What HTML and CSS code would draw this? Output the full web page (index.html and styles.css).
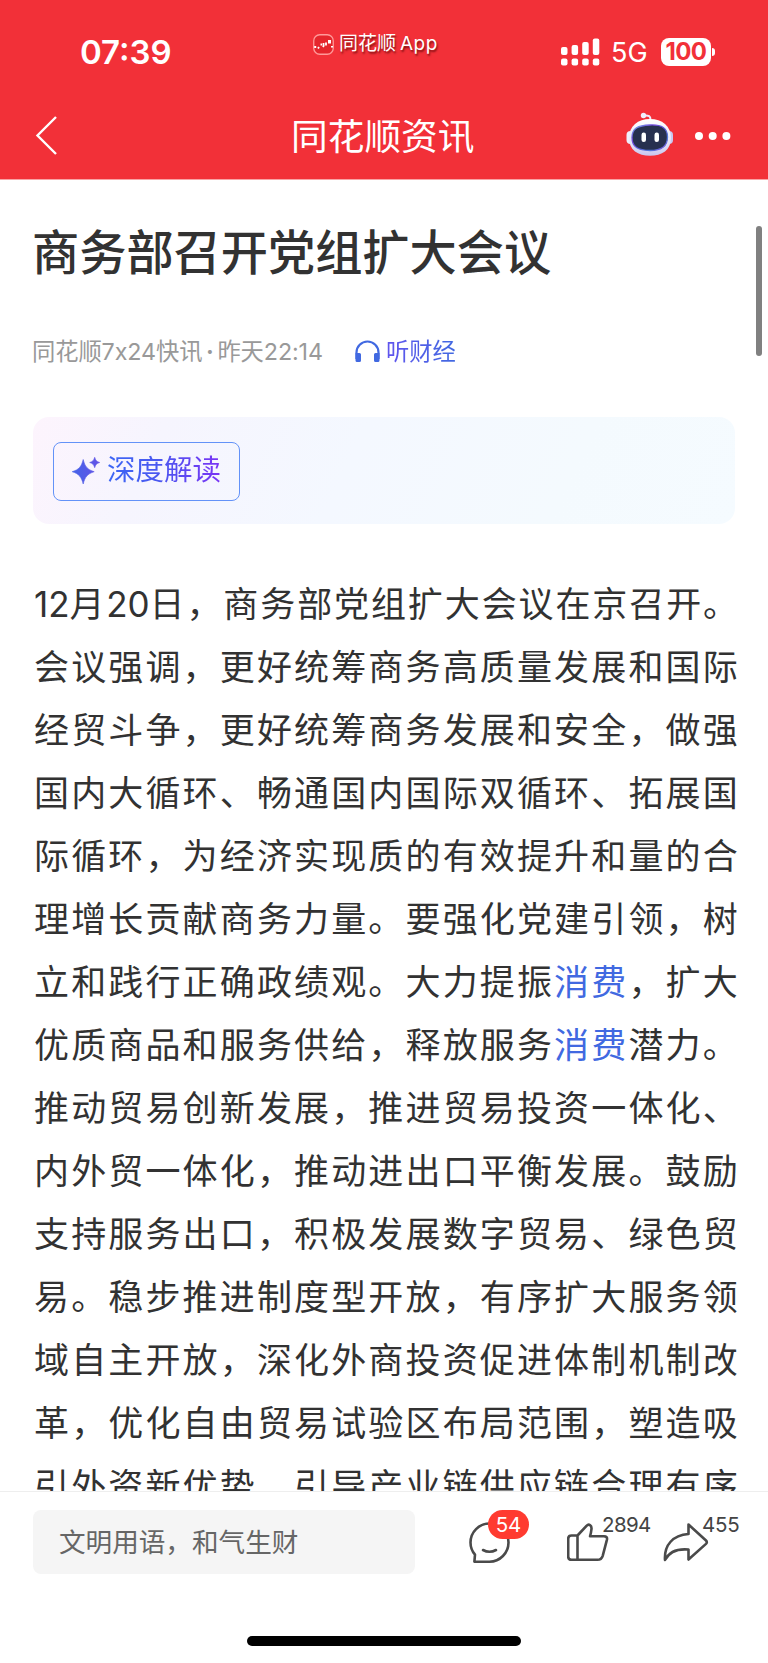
FILE: index.html
```html
<!DOCTYPE html>
<html lang="zh-CN">
<head>
<meta charset="utf-8">
<title>同花顺资讯</title>
<link rel="stylesheet" href="styles.css">
</head>
<body>
<div class="screen">
  <header class="header">
    <div class="status">
      <span class="time">07:39</span>
      <div class="source-app">
        <svg class="app-logo" width="21" height="21" viewBox="0 0 21 21"><rect x=".75" y=".75" width="19.5" height="19.5" rx="6" fill="#e5252c" stroke="#f99" stroke-width="1.3"/><path d="M1.200 13h2M5 14.500l1-1.500M7.500 10.500h1.500M10 13l1-2M10.500 9v3M13 11.500v-3" fill="none" stroke="#fff" stroke-width="1.800"/><path d="M15 6h3v3.500h-3zM18 12h2v1.500h-2z" fill="#fff"/></svg>
        <span class="app-name">同花顺</span><span class="app-latin">App</span>
      </div>
      <svg class="signal" width="39" height="28" viewBox="0 0 39 28" fill="#fff"><rect x="0" y="9" width="6.500" height="8" rx="2"/><rect x="10.600" y="7" width="6.500" height="10" rx="2"/><rect x="21.200" y="4" width="6.500" height="13" rx="2"/><rect x="31.800" y="0.500" width="6.500" height="16.500" rx="2"/><rect x="0" y="20.500" width="6.500" height="7" rx="2"/><rect x="10.600" y="20.500" width="6.500" height="7" rx="2"/><rect x="21.200" y="20.500" width="6.500" height="7" rx="2"/><rect x="31.800" y="20.500" width="6.500" height="7" rx="2"/></svg>
      <span class="network">5G</span>
      <span class="battery">100</span><span class="battery-tip"></span>
    </div>
    <nav class="navbar">
      <svg class="back" width="23" height="42" viewBox="0 0 23 42"><path d="M21 2L2.500 20.500 21 39" fill="none" stroke="#fff" stroke-width="2.400"/></svg>
      <div class="nav-title">同花顺资讯</div>
      <svg class="robot" width="48" height="45" viewBox="0 0 48 45">
        <defs>
          <linearGradient id="shell" x1="0" y1="0" x2="0" y2="1"><stop offset="0" stop-color="#fff"/><stop offset=".65" stop-color="#e4e4f8"/><stop offset="1" stop-color="#c9c6ee"/></linearGradient>
          <linearGradient id="rim" x1="0" y1="0" x2="1" y2="1"><stop offset="0" stop-color="#6fb6e8"/><stop offset=".3" stop-color="#7344dc"/><stop offset=".75" stop-color="#4d78d8"/><stop offset="1" stop-color="#8a45dc"/></linearGradient>
        </defs>
        <path d="M18 3.500c5-.5 6.500 1 6.500 4" fill="none" stroke="#eeeafa" stroke-width="2"/>
        <circle cx="17.500" cy="3.500" r="2.700" fill="#f1effc"/>
        <rect x="0.500" y="19" width="8" height="13" rx="4" fill="#eeeefb"/><rect x="39" y="19" width="8" height="13" rx="4" fill="#c9c8f1"/>
        <path d="M24 7C36 7 45 14 45 26S36 43.800 24 43.800 3 38 3 26 12 7 24 7z" fill="url(#shell)"/>
        <path d="M24 13C36 12.500 41.500 16 41.500 25S36 38.500 24 38.500 6 35 6 25.500 12 13.500 24 13z" fill="#27304f" stroke="url(#rim)" stroke-width="1.300"/>
        <rect x="15.500" y="20.500" width="4.500" height="9.500" rx="2.200" fill="#fff"/><rect x="28.500" y="20.500" width="4.500" height="9.500" rx="2.200" fill="#fff"/>
      </svg>
      <svg class="more" width="36" height="8" viewBox="0 0 36 8" fill="#fff"><circle cx="4" cy="4" r="4"/><circle cx="17.700" cy="4" r="4"/><circle cx="31.400" cy="4" r="4"/></svg>
    </nav>
  </header>

  <main class="article">
    <h1 class="headline">商务部召开党组扩大会议</h1>
    <div class="meta">
      <span class="byline">同花顺7x24快讯<span class="dot">·</span>昨天22:14</span>
      <svg class="headphones" width="25" height="23" viewBox="0 0 25 23"><path d="M1.500 19v-6.500a11 11 0 0 1 22 0V19" fill="none" stroke="#4169e1" stroke-width="2.200"/><path d="M.5 13h4q1.500 0 1.500 1.500v6q0 1.500-1.500 1.500H2Q.5 22 .5 20.500zM24.500 13h-4q-1.500 0-1.500 1.500v6q0 1.500 1.500 1.500H23q1.500 0 1.500-1.500z" fill="#4169e1"/></svg>
      <span class="listen">听财经</span>
    </div>
    <section class="insight">
      <div class="insight-btn">
        <svg class="spark" width="28" height="28" viewBox="0 0 28 28"><defs><linearGradient id="sg" x1="0" y1="0" x2="1" y2="0"><stop offset="0" stop-color="#4563e8"/><stop offset="1" stop-color="#6452e6"/></linearGradient></defs><path d="M11.200 2.500c1.800 7.200 4.200 10 11 12.200-6.800 2.200-9.200 5.200-11 12.300C9.400 19.900 7 16.900.2 14.700 7 12.500 9.400 9.700 11.200 2.500zM22.700.3c.9 3 1.900 4.300 5 5.200-3.100.9-4.100 2.200-5 5.200-.9-3-1.900-4.300-5-5.200 3.100-.9 4.100-2.200 5-5.200z" fill="url(#sg)" stroke="url(#sg)" stroke-width=".6"/></svg>
        <span class="insight-label">深度解读</span>
      </div>
    </section>
    <p class="content"><span class="lead"><span class="num">12</span>月<span class="num">20</span>日，商务部党组扩大会议在京召开。</span><br>会议强调，更好统筹商务高质量发展和国际<br>经贸斗争，更好统筹商务发展和安全，做强<br>国内大循环、畅通国内国际双循环、拓展国<br>际循环，为经济实现质的有效提升和量的合<br>理增长贡献商务力量。要强化党建引领，树<br>立和践行正确政绩观。大力提振<a class="link">消费</a>，扩大<br>优质商品和服务供给，释放服务<a class="link">消费</a>潜力。<br>推动贸易创新发展，推进贸易投资一体化、<br>内外贸一体化，推动进出口平衡发展。鼓励<br>支持服务出口，积极发展数字贸易、绿色贸<br>易。稳步推进制度型开放，有序扩大服务领<br>域自主开放，深化外商投资促进体制机制改<br>革，优化自由贸易试验区布局范围，塑造吸<br>引外资新优势，引导产业链供应链合理有序</p>
    <div class="scrollbar"></div>
  </main>

  <footer class="footer">
    <div class="toolbar">
      <div class="input">文明用语，和气生财</div>
      <div class="action comment">
        <svg width="41" height="42" viewBox="0 0 41 42" fill="none" stroke="#4a4a4a" stroke-width="2.600" stroke-linecap="round" stroke-linejoin="round"><path d="M20.500 1.500C10 1.500 1.500 10 1.500 20.500c0 5 1.600 8.800 4.500 12.200L5.400 39.700h15.100c10.500 0 19-8.700 19-19.200S31 1.500 20.500 1.500z"/><path d="M14 28q6.500 3.500 13 0"/></svg>
        <span class="badge">54</span>
      </div>
      <div class="action like">
        <svg width="42" height="39" viewBox="0 0 42 39" fill="none" stroke="#4a4a4a" stroke-width="2.600" stroke-linejoin="round"><path d="M10.500 12.500H4.500q-3.300 0-3.300 3.300v17.700q0 3.300 3.300 3.300h26q4 0 5.200-4l4.200-16q.8-3.500-3-3.500H23q1-3 1.500-7.500C24.800 2 21.800.5 19.500 2.800L10.500 12.500v24.300"/></svg>
        <span class="count">2894</span>
      </div>
      <div class="action share">
        <svg width="46" height="39" viewBox="0 0 46 39" fill="none" stroke="#4a4a4a" stroke-width="2.600" stroke-linejoin="round"><path d="M25.500 1.500L43 17.500q1.700 1.700 0 3.400L25.500 36.500V26.500C14 25.500 6 29 2 37 1 22 10 12 25.500 11z"/></svg>
        <span class="count">455</span>
      </div>
    </div>
    <div class="home-indicator"></div>
  </footer>
</div>
</body>
</html>
```
FILE: styles.css
```css
* { box-sizing: border-box; }
body { margin: 0; background: #fff; font-family: Inter, "Noto Sans CJK SC", sans-serif; }
svg { display: block; flex: none; }
.screen { width: 768px; height: 1663px; display: flex; flex-direction: column; overflow: hidden; }

.header { height: 180px; flex: none; background: #f23038; border-bottom: 1px solid #f9a3a5; color: #fff; }
.status { height: 103px; padding-left: 80px; display: flex; align-items: center; white-space: nowrap; }
.time { width: 233px; font-size: 33px; font-weight: 600; line-height: 40px; }
.source-app { width: 248px; display: flex; align-items: center; margin-top: -15px; text-shadow: 1px 2px 2px rgba(80, 0, 0, .7); font-size: 19px; line-height: 24px; }
.app-name { margin-left: 5px; }
.app-latin { margin-left: 4px; letter-spacing: .5px; }
.network { margin-left: 11px; width: 50px; font-size: 27px; line-height: 32px; margin-top: 2px; }
.battery { width: 50px; height: 28px; border-radius: 8px; background: #fff; color: #f23038; font-size: 24px; font-weight: 700; line-height: 28px; text-align: center; letter-spacing: -.6px; }
.battery-tip { width: 3px; height: 8px; margin-left: 1px; border-radius: 0 4px 4px 0; background: #fff; }
.navbar { height: 66px; display: flex; align-items: center; padding-left: 35px; }
.nav-title { margin: 2px 0 0 233px; width: 335px; font-size: 36.700px; line-height: 46px; }
.robot { margin-top: -4px; }
.more { margin-left: 21px; }

.article { flex: 1; min-height: 0; overflow: hidden; position: relative; padding: 43px 33px 0; }
.headline { margin: 0 0 0 -1px; font-size: 47.200px; line-height: 60px; font-weight: 500; color: #323232; white-space: nowrap; }
.meta { margin-top: 52px; height: 34px; display: flex; align-items: center; font-size: 23.300px; line-height: 34px; color: #999; white-space: nowrap; }
.byline { width: 323px; margin-left: -1px; letter-spacing: -.1px; }
.dot { display: inline-block; width: 15px; text-align: center; font-weight: 700; }
.listen { margin-left: 6px; background: linear-gradient(90deg, #6054ee, #4169e1); background-clip: text; color: transparent; }
.headphones { margin-top: -2px; }
.insight { width: 702px; height: 107px; margin-top: 48px; border-radius: 16px; padding: 25px 20px; background: linear-gradient(115deg, #fdf4fd 0%, #f6f5fe 18%, #f4f8ff 45%, #f4fafe 75%, #f5fbff 100%); }
.insight-btn { width: 187px; height: 59px; border: 1.500px solid #6392f8; border-radius: 8px; display: flex; align-items: center; padding-left: 18px; }
.insight-label { margin: -4px 0 0 7px; font-size: 28.500px; line-height: 40px; background: linear-gradient(90deg, #3b66f5, #4a58f0 45%, #7a33f5); background-clip: text; color: transparent; }
.spark { margin-top: -2px; }
.content { margin: 49px 0 0 1px; font-size: 35px; line-height: 63px; letter-spacing: 2.150px; color: #323232; white-space: nowrap; }
.lead { letter-spacing: 1.900px; }
.num { letter-spacing: -.1px; }
.link { color: #4169e1; }
.scrollbar { position: absolute; top: 46px; right: 6px; width: 6px; height: 130px; border-radius: 3px; background: #808080; }

.footer { height: 172px; flex: none; border-top: 1px solid #eee; background: #fff; }
.toolbar { height: 144px; padding: 18px 0 0 33px; display: flex; align-items: flex-start; }
.input { width: 382px; height: 64px; border-radius: 8px; background: #f5f5f5; padding-left: 26px; font-size: 26.600px; line-height: 64px; color: #666; }
.action { position: relative; margin-top: 12px; }
.comment { margin-left: 54px; }
.like { margin: 13px 0 0 57px; }
.share { margin: 13px 0 0 54px; }
.badge { position: absolute; left: 19px; top: -12px; width: 41px; height: 29px; border-radius: 15px; background: #ff3b30; color: #fff; font-size: 20.500px; line-height: 29px; text-align: center; }
.count { position: absolute; left: 35px; top: -11px; font-size: 20.500px; line-height: 25px; color: #444; letter-spacing: -.6px; }
.share .count { left: 39px; letter-spacing: -.2px; }
.home-indicator { width: 274px; height: 10px; margin-left: 247px; border-radius: 5px; background: #000; }
```
